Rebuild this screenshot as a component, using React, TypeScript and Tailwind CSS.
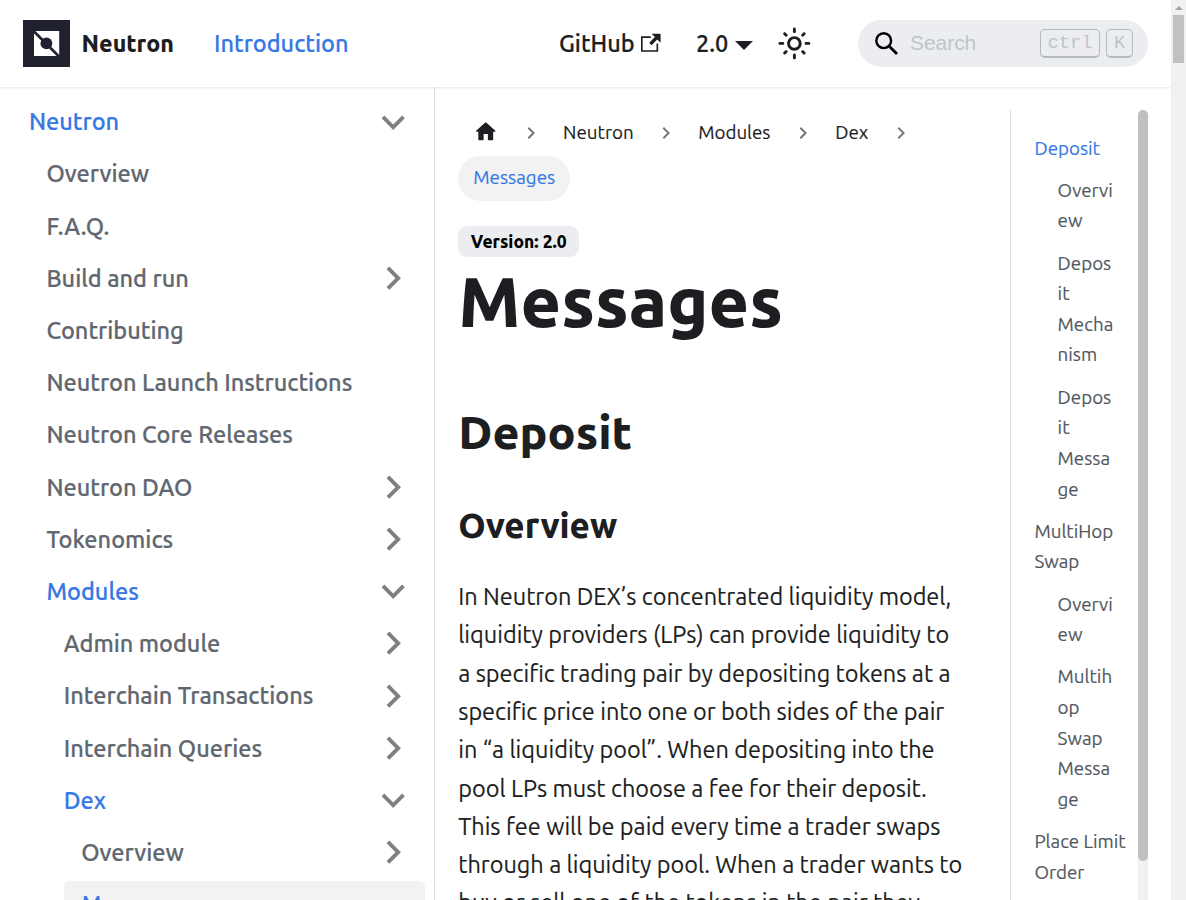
import React from "react";

type Item = { label: string; level: number; arrow?: "down" | "right"; active?: boolean; current?: boolean };

const items: Item[] = [
  { label: "Neutron", level: 0, arrow: "down", active: true },
  { label: "Overview", level: 1 },
  { label: "F.A.Q.", level: 1 },
  { label: "Build and run", level: 1, arrow: "right" },
  { label: "Contributing", level: 1 },
  { label: "Neutron Launch Instructions", level: 1 },
  { label: "Neutron Core Releases", level: 1 },
  { label: "Neutron DAO", level: 1, arrow: "right" },
  { label: "Tokenomics", level: 1, arrow: "right" },
  { label: "Modules", level: 1, arrow: "down", active: true },
  { label: "Admin module", level: 2, arrow: "right" },
  { label: "Interchain Transactions", level: 2, arrow: "right" },
  { label: "Interchain Queries", level: 2, arrow: "right" },
  { label: "Dex", level: 2, arrow: "down", active: true },
  { label: "Overview", level: 3, arrow: "right" },
  { label: "Messages", level: 3, active: true, current: true },
];

const indents = ["ml-[11.6px]", "ml-[29px]", "ml-[46.4px]", "ml-[63.8px]"];

function Chevron({ className }: { className: string }) {
  return (
    <svg viewBox="0 0 24 24" className={`shrink-0 ${className}`}>
      <path fill="currentColor" d="M10 6L8.59 7.41 13.17 12l-4.58 4.59L10 18l6-6z" />
    </svg>
  );
}

function Sidebar() {
  return (
    <aside className="w-[435px] h-[813px] shrink-0 overflow-hidden border-r border-[#dadde1] pt-[11.6px] pr-[9.5px]">
      <ul className="flex flex-col gap-[5.8px]">
        {items.map((it, i) => (
          <li key={i} className={indents[it.level]}>
            <div
              className={`flex h-[46.4px] items-center justify-between rounded-[5.8px] pl-[17.4px] pr-[8.2px] text-[23.5px] font-medium leading-[29px] whitespace-nowrap [-webkit-text-stroke:0.2px] ${it.current ? "bg-[#f2f2f2]" : ""} ${it.active ? "text-[#3578e5]" : "text-[#606770]"}`}
            >
              <span>{it.label}</span>
              {it.arrow && (
                <Chevron className={`size-[46.4px] text-[#808080] ${it.arrow === "down" ? "rotate-90" : ""}`} />
              )}
            </div>
          </li>
        ))}
      </ul>
    </aside>
  );
}

function Navbar() {
  return (
    <nav className="flex h-[87px] items-center bg-white px-[23px] text-[23.5px] font-medium shadow-[0_1px_2px_0_rgba(0,0,0,0.1)]">
      <svg viewBox="0 0 47 47" className="size-[47px]">
        <rect width="47" height="47" fill="#20212f" />
        <rect x="11" y="11" width="25.2" height="25" fill="#fff" />
        <path d="M10 10.5l26 26" stroke="#20212f" strokeWidth="2.6" fill="none" />
        <circle cx="23.4" cy="23.4" r="5.9" fill="#20212f" />
      </svg>
      <b className="ml-[11.6px] mt-[-1px] w-[132.4px] text-[23.2px] font-extrabold">Neutron</b>
      <span className="w-[345px] pt-px text-[#3578e5] [-webkit-text-stroke:0.2px]">Introduction</span>
      <span className="w-[82.5px] pt-px [-webkit-text-stroke:0.2px]">GitHub</span>
      <svg viewBox="0 0 24 24" className="-mt-px size-[19.6px]">
        <path fill="currentColor" d="M21 13v10h-21v-19h12v2h-10v15h17v-8h2zm3-12h-10.988l4.035 4-6.977 7.07 2.828 2.828 6.977-7.07 4.125 4.172v-11z" />
      </svg>
      <span className="ml-[34.9px] w-[39px] pt-px [-webkit-text-stroke:0.2px]">2.0</span>
      <svg viewBox="0 0 18 9" className="mt-[4px] h-[9px] w-[18px]"><path d="M0 0h18l-9 9z" fill="currentColor" /></svg>
      <svg viewBox="0 0 24 24" className="ml-[24px] size-[34.8px]">
        <path fill="currentColor" d="M12,9c1.65,0,3,1.35,3,3s-1.35,3-3,3s-3-1.35-3-3S10.35,9,12,9 M12,7c-2.76,0-5,2.24-5,5s2.24,5,5,5s5-2.24,5-5 S14.76,7,12,7L12,7z M2,13l2,0c0.55,0,1-0.45,1-1s-0.45-1-1-1l-2,0c-0.55,0-1,0.45-1,1S1.45,13,2,13z M20,13l2,0c0.55,0,1-0.45,1-1 s-0.45-1-1-1l-2,0c-0.55,0-1,0.45-1,1S19.45,13,20,13z M11,2v2c0,0.55,0.45,1,1,1s1-0.45,1-1V2c0-0.55-0.45-1-1-1S11,1.45,11,2z M11,20v2c0,0.55,0.45,1,1,1s1-0.45,1-1v-2c0-0.55-0.45-1-1-1C11.45,19,11,19.45,11,20z M5.99,4.58c-0.39-0.39-1.03-0.39-1.41,0 c-0.39,0.39-0.39,1.03,0,1.41l1.06,1.06c0.39,0.39,1.03,0.39,1.41,0s0.39-1.03,0-1.41L5.99,4.58z M18.36,16.95 c-0.39-0.39-1.03-0.39-1.41,0c-0.39,0.39-0.39,1.03,0,1.41l1.06,1.06c0.39,0.39,1.03,0.39,1.41,0c0.39-0.39,0.39-1.03,0-1.41 L18.36,16.95z M19.42,5.99c0.39-0.39,0.39-1.03,0-1.41c-0.39-0.39-1.03-0.39-1.41,0l-1.06,1.06c-0.39,0.39-0.39,1.03,0,1.41 s1.03,0.39,1.41,0L19.42,5.99z M7.05,18.36c0.39-0.39,0.39-1.03,0-1.41c-0.39-0.39-1.03-0.39-1.41,0l-1.06,1.06 c-0.39,0.39-0.39,1.03,0,1.41s1.03,0.39,1.41,0L7.05,18.36z" />
      </svg>
      <div className="ml-auto flex h-[47px] w-[290px] items-center rounded-full bg-[#ebedf0] pl-[17px] pr-[15px] font-['Liberation_Sans',sans-serif] text-[20.9px] font-normal text-[#bdc4ca]">
        <svg viewBox="0 0 23 23" className="size-[23px]" fill="none" stroke="#000">
          <circle cx="8.7" cy="8.7" r="7.4" strokeWidth="2.4" />
          <path d="M14 14l8 8" strokeWidth="2.8" />
        </svg>
        <span className="ml-[12px] mt-[-2px] flex-1">Search</span>
        <kbd className="flex h-[29px] w-[60px] items-center justify-center rounded-[5px] border border-b-2 border-[#b4bac2] pt-[2px] font-['Liberation_Mono',monospace] text-[18.6px] leading-[24px]">ctrl</kbd>
        <kbd className="ml-[6px] flex h-[29px] w-[27px] items-center justify-center rounded-[5px] border border-b-2 border-[#b4bac2] pt-[2px] font-['Liberation_Mono',monospace] text-[18.6px] leading-[24px]">K</kbd>
      </div>
    </nav>
  );
}

const paragraph = [
  "In Neutron DEX’s concentrated liquidity model,",
  "liquidity providers (LPs) can provide liquidity to",
  "a specific trading pair by depositing tokens at a",
  "specific price into one or both sides of the pair",
  "in “a liquidity pool”. When depositing into the",
  "pool LPs must choose a fee for their deposit.",
  "This fee will be paid every time a trader swaps",
  "through a liquidity pool. When a trader wants to",
  "buy or sell one of the tokens in the pair they",
];

function Article() {
  return (
    <main className="h-[813px] w-[575px] shrink-0 overflow-hidden pl-[23.2px] pt-[23px] whitespace-nowrap">
      <div className="flex h-[46px] items-center text-[18.75px] [-webkit-text-stroke:0.15px]">
        <svg viewBox="0 0 24 24" className="ml-[15px] -mt-[3px] size-[25.5px]">
          <path d="M10 19v-5h4v5c0 .55.45 1 1 1h3c.55 0 1-.45 1-1v-7h1.7c.46 0 .68-.57.33-.87L12.67 3.6c-.38-.34-.96-.34-1.34 0l-8.36 7.53c-.34.3-.13.87.33.87H5v7c0 .55.45 1 1 1h3c.55 0 1-.45 1-1z" fill="currentColor" />
        </svg>
        <Chevron className="ml-[20px] size-[24px] text-[#777]" />
        <span className="ml-[20.4px] w-[71px]">Neutron</span>
        <Chevron className="ml-[19.6px] size-[24px] text-[#777]" />
        <span className="ml-[20.5px] w-[73px]">Modules</span>
        <Chevron className="ml-[20px] size-[24px] text-[#777]" />
        <span className="ml-[20px] w-[33px]">Dex</span>
        <Chevron className="ml-[20.5px] size-[24px] text-[#777]" />
      </div>
      <div className="flex h-[45px] w-[112px] items-center justify-center rounded-full bg-[#f2f2f2] pb-[2px] text-[18.8px] text-[#3578e5] [-webkit-text-stroke:0.15px]">Messages</div>
      <div className="mt-[25px] flex h-[31px] w-[121px] items-center justify-center rounded-[9px] bg-[#ebedf0] pt-px text-[17.4px] font-extrabold text-black">Version: 2.0</div>
      <h1 className="mt-[1px] text-[69.6px] font-extrabold leading-[87px]">Messages</h1>
      <h2 className="mt-[58px] text-[46.4px] font-extrabold leading-[58px]">Deposit</h2>
      <h3 className="mt-[43px] text-[34.8px] font-extrabold leading-[43.5px]">Overview</h3>
      <p className="mt-[29.7px] text-[23.49px] leading-[38.28px] [-webkit-text-stroke:0.15px]">
        {paragraph.map((l) => <span key={l} className="block">{l}</span>)}
      </p>
    </main>
  );
}

const toc: { lines: string[]; sub?: boolean; active?: boolean }[] = [
  { lines: ["Deposit"], active: true },
  { lines: ["Overvi", "ew"], sub: true },
  { lines: ["Depos", "it", "Mecha", "nism"], sub: true },
  { lines: ["Depos", "it", "Messa", "ge"], sub: true },
  { lines: ["MultiHop", "Swap"] },
  { lines: ["Overvi", "ew"], sub: true },
  { lines: ["Multih", "op", "Swap", "Messa", "ge"], sub: true },
  { lines: ["Place Limit", "Order"] },
];

function Toc() {
  return (
    <div className="mt-[23px] flex h-[790px] w-[138px] shrink-0 overflow-hidden border-l border-[#dadde1]">
      <ul className="flex flex-1 flex-col gap-[11.6px] pl-[23.4px] pt-[23.5px] text-[18.75px] leading-[30.62px] text-[#525860] whitespace-nowrap [-webkit-text-stroke:0.15px]">
        {toc.map((t, i) => (
          <li key={i} className={`${t.sub ? "pl-[23.2px]" : ""} ${t.active ? "text-[#3578e5]" : ""}`}>
            {t.lines.map((l) => <div key={l}>{l}</div>)}
          </li>
        ))}
      </ul>
      <div className="w-[10px] shrink-0 bg-[#f1f1f1] rounded-t-[10px]"><div className="h-[751px] rounded-[10px] bg-[#c0c0c0]" /></div>
    </div>
  );
}

export default function App() {
  return (
    <div className="flex h-[900px] w-[1186px] overflow-hidden bg-white font-[Ubuntu,'Noto_Sans',sans-serif] text-[#1c1e21]">
      <div className="w-[1171px]">
        <Navbar />
        <div className="flex">
          <Sidebar />
          <Article />
          <Toc />
        </div>
      </div>
      <div className="flex w-[15px] flex-col items-center bg-[#f1f1f1] pt-[6px]">
        <svg viewBox="0 0 8 4" className="h-[4px] w-[8px]"><path d="M0 4l4-4 4 4z" fill="#a3a3a3" /></svg>
        <div className="mt-[5px] h-[48px] w-[11px] bg-[#c1c1c1]" />
      </div>
    </div>
  );
}
